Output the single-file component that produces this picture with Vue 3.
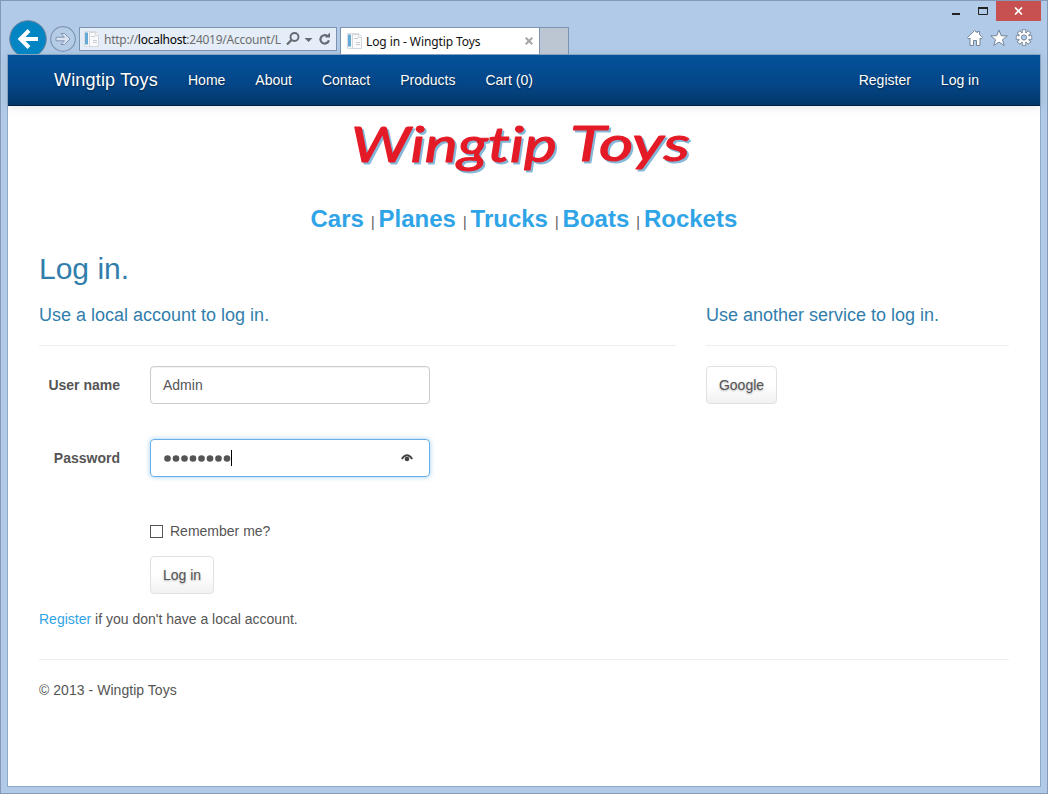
<script setup>
const nav = ['Home', 'About', 'Contact', 'Products', 'Cart (0)']
const categories = ['Cars', 'Planes', 'Trucks', 'Boats', 'Rockets']
const teeth = [0, 45, 90, 135, 180, 225, 270, 315]
</script>

<template>
  <div class="window">
    <header class="chrome">
      <svg class="back" width="38" height="34" viewBox="0 0 38 34">
        <circle cx="19" cy="19" r="18.3" fill="#0385c3" stroke="#6f8299" stroke-width="1" />
        <path d="M20 10.500 11.500 19 20 27.500M12 19H29" fill="none" stroke="#fff" stroke-width="4" />
      </svg>
      <svg class="forward" width="28" height="28" viewBox="0 0 28 28">
        <circle cx="14" cy="14" r="12.300" fill="#b5cce7" stroke="#8195b3" stroke-width="1.200" />
        <path d="M7 12.200h8.500L12 8.500h3.500L21 14l-5.500 5.500H12l3.500-3.700H7z" fill="#dbe6f4" stroke="#8294b0" stroke-width="1" />
      </svg>
      <div class="address">
        <svg class="page" width="16" height="16" viewBox="0 0 16 16">
          <path d="M.5.500h11l3 3v12H.5z" fill="#f5f7f9" stroke="#d8dce0" />
          <path d="M1 1.500h3v12H1z" fill="#65a9d7" />
          <path d="M5.500 1.500h6v3h3v11h-9z" fill="#fafafa" stroke="#d3d6da" />
          <path d="M7 5.500h4M9 9.500h4M9 11.500h4" stroke="#c7cbd0" />
        </svg>
        <span class="url">http://<b>localhost</b>:24019/Account/L</span>
        <svg class="tools" width="50" height="18" viewBox="0 0 50 18">
          <g fill="none" stroke="#656b73">
            <circle cx="9.500" cy="7" r="4" stroke-width="1.900" />
            <path d="M6.500 10 2 14.500" stroke-width="2.300" />
            <path d="M42.500 6.300A4.200 4.200 0 1 0 43.800 10.200" stroke-width="2.200" />
          </g>
          <path d="M19.500 8h8l-4 4zM40 7.500H45V2.500z" fill="#656b73" />
        </svg>
      </div>
      <div class="tab">
        <svg class="page" width="16" height="16" viewBox="0 0 16 16">
          <path d="M.5.500h11l3 3v12H.5z" fill="#f5f7f9" stroke="#d8dce0" />
          <path d="M1 1.500h3v12H1z" fill="#65a9d7" />
          <path d="M5.500 1.500h6v3h3v11h-9z" fill="#fafafa" stroke="#d3d6da" />
          <path d="M7 5.500h4M9 9.500h4M9 11.500h4" stroke="#c7cbd0" />
        </svg>
        <span class="title">Log in - Wingtip Toys</span>
        <svg class="tabx" width="8" height="8" viewBox="0 0 8 8"><path d="m.7.700 6.600 6.600m0-6.600L.7 7.300" stroke="#a5a5a5" stroke-width="2" /></svg>
      </div>
      <div class="newtab"></div>
      <div class="right">
        <div class="controls">
          <svg width="45" height="20" viewBox="0 0 45 20">
            <path d="M1 12h8v2H1z" fill="#222" />
            <path d="M27.500 7.500v6h9v-6z" fill="none" stroke="#222" />
            <path d="M27 6h10v2H27z" fill="#222" />
          </svg>
          <div class="close"><svg width="9" height="8" viewBox="0 0 9 8"><path d="m1 .5 7 7m0-7-7 7" stroke="#fff" stroke-width="1.700" /></svg></div>
        </div>
        <svg class="actions" width="68" height="18" viewBox="0 0 68 18" fill="#fff" stroke="#76869a" stroke-width="1">
          <path d="M8.500 1.500 1.500 8.500 2.800 10 4 9v7.500h3.500v-5h3v5H14V9l1.200 1 1.300-1.500-3-3v-3h-2v1.200z" />
          <path d="m33 1 2.200 5.700 6.100.2-4.800 3.800 1.700 5.800-5.200-3.400-5.200 3.400 1.700-5.800-4.800-3.800 6.100-.2z" />
          <g transform="translate(58 8.500)">
            <rect v-for="a in teeth" :key="a" x="-1.700" y="-7.700" width="3.400" height="4" :transform="`rotate(${a})`" />
            <circle r="5.300" />
            <rect v-for="a in teeth" :key="'f' + a" x="-1.200" y="-7.200" width="2.400" height="3.500" stroke="none" :transform="`rotate(${a})`" />
            <circle r="2.600" fill="#b1cbe9" />
          </g>
        </svg>
      </div>
    </header>

    <div class="viewport">
      <nav class="navbar">
        <span class="brand">Wingtip Toys</span>
        <a v-for="n in nav" :key="n">{{ n }}</a>
        <span class="grow"></span>
        <a>Register</a><a>Log in</a>
      </nav>

      <svg class="logo" width="370" height="75" viewBox="0 0 370 75">
        <g class="script">
          <text x="11" y="52" textLength="206" lengthAdjust="spacingAndGlyphs">Wingtip</text>
          <text x="230" y="51" textLength="120" lengthAdjust="spacingAndGlyphs">Toys</text>
        </g>
      </svg>

      <div class="cats">
        <template v-for="(c, i) in categories" :key="c"><span v-if="i" class="bar">|</span><a>{{ c }}</a></template>
      </div>

      <main>
        <h2>Log in.</h2>
        <div class="cols">
          <section class="local">
            <h4>Use a local account to log in.</h4>
            <hr />
            <div class="row"><label>User name</label><div class="input">Admin</div></div>
            <div class="row">
              <label>Password</label>
              <div class="input focus">
                <svg class="dots" width="68" height="8" viewBox="0 0 68 8"><circle v-for="d in 8" :key="d" :cx="d * 8.5 - 4" cy="4.500" r="3.300" fill="#555" /></svg><span class="caret"></span>
                <svg class="eye" width="12" height="8" viewBox="0 0 12 8"><path d="M.8 5Q6-2.400 11.200 5" fill="none" stroke="#444" stroke-width="2" /><circle cx="6" cy="5" r="2.300" fill="#444" /></svg>
              </div>
            </div>
            <div class="remember"><span class="check"></span>Remember me?</div>
            <button class="btn login">Log in</button>
            <p><a>Register</a> if you don't have a local account.</p>
          </section>
          <section class="social">
            <h4>Use another service to log in.</h4>
            <hr />
            <button class="btn google">Google</button>
          </section>
        </div>
        <hr class="footline" />
        <footer>© 2013 - Wingtip Toys</footer>
      </main>
    </div>
  </div>
</template>

<style>
body { margin: 0; overflow: hidden; }
</style>

<style scoped>
* { box-sizing: border-box; }
.window { width: 1048px; height: 794px; background: #b0cae7; border: 1px solid #8599b6; padding: 0 6px; font: 14px/20px "Liberation Sans", Arial, sans-serif; color: #555; }
svg { display: block; flex: none; }
.chrome { height: 53px; display: flex; align-items: flex-start; }
.back { margin: 19px 0 0 2px; }
.forward { margin: 24px 0 0 2px; }
.address { width: 258px; height: 24px; margin: 26px 0 0 2px; border: 1px solid #7c92ae; background: #e4edf8; display: flex; align-items: center; padding-left: 4px; }
.url { font: 12px/20px "Noto Sans", "Open Sans", sans-serif; color: #6d6d6d; width: 178px; margin: 2px 0 0 4px; white-space: nowrap; letter-spacing: -0.250px; }
.url b { font-weight: 400; color: #000; }
.tools { margin-left: 3px; }
.tab { margin: 26px 0 0 3px; width: 200px; height: 27px; background: #fff; border: 1px solid #7c92ae; border-bottom: 0; display: flex; align-items: center; padding-left: 6px; }
.title { font: 12px/20px "Noto Sans", "Open Sans", sans-serif; color: #111; margin: 2px 0 0 3px; width: 159px; letter-spacing: -0.090px; white-space: nowrap; }
.newtab { margin-top: 26px; width: 29px; height: 27px; background: #bcc6d3; border: 1px solid #7c92ae; border-width: 1px 1px 0 0; }
.right { margin-left: auto; display: flex; flex-direction: column; align-items: flex-end; }
.controls { display: flex; }
.close { width: 45px; height: 20px; background: #c75050; display: flex; align-items: center; justify-content: center; }
.actions { margin: 8px 7px 0 0; }
.viewport { height: 733px; border: 1px solid #8fa9c8; background: #fff; }
.navbar { height: 51px; border-bottom: 1px solid #02203f; background: linear-gradient(#04519b, #044687 60%, #033769); box-shadow: 0 1px 10px rgba(0,0,0,.1); display: flex; align-items: center; padding: 0 46px; color: #fff; text-shadow: 0 1px 2px rgba(0,0,0,.5); }
.brand { font-size: 18px; margin-right: 15px; width: 104px; white-space: nowrap; letter-spacing: 0.180px; }
.navbar a { padding: 0 15px; }
.grow { flex: 1; }
.logo { margin: 4px 0 0 332px; }
.script { font: italic 400 49px Lato, sans-serif; font-variant-ligatures: none; fill: #e41b27; stroke: #e41b27; stroke-width: 1.100px; stroke-linejoin: round; filter: drop-shadow(2px 2.500px 0 #83b8d9); }
.cats { margin-top: 18px; height: 33px; padding-left: 302.500px; display: flex; align-items: baseline; color: #2fa4e7; white-space: nowrap; }
.cats a { font: bold 24px/32px "Liberation Sans", Arial, sans-serif; }
.bar { color: #555; margin: 0 4px 0 7px; }
main { padding: 0 31px; }
h2 { margin: 16px 0 0; font-size: 30px; line-height: 33px; font-weight: 400; color: #317eac; }
h4 { margin: 0; font-size: 18px; line-height: 20px; font-weight: 400; color: #317eac; }
hr { border: 0; border-top: 1px solid #eee; margin: 20px 0; }
.cols { display: flex; gap: 30px; margin-top: 20px; }
.local { width: 637px; }
.social { flex: 1; }
.row { display: flex; align-items: center; margin-bottom: 35px; }
label { width: 81px; text-align: right; font-weight: 700; margin-right: 30px; }
.input { width: 280px; height: 38px; border: 1px solid #ccc; border-radius: 4px; padding: 0 12px; display: flex; align-items: center; box-shadow: inset 0 1px 1px rgba(0,0,0,.05); }
.focus { border-color: #66afe9; box-shadow: 0 0 5px rgba(102,175,233,.6); }
.caret { width: 1px; height: 16px; background: #000; }
.eye { margin: 0 4px 0 auto; }
.remember { display: flex; align-items: center; margin: 44px 0 0 111px; }
.check { width: 13px; height: 13px; border: 1px solid #555; margin-right: 7px; }
.btn { display: block; height: 38px; padding: 0; border: 1px solid #e1e1e1; border-radius: 4px; background: linear-gradient(#fff, #fff 50%, #f1f1f1); color: #555; font: 14px/20px "Liberation Sans", Arial, sans-serif; text-shadow: 0 1px 2px rgba(0,0,0,.3); }
.login { width: 64px; margin: 15px 0 0 111px; }
.google { width: 71px; }
p { margin: 15px 0 0; }
p a { color: #2fa4e7; }
.footline { margin: 30px 0 20px; }
footer { letter-spacing: 0.040px; }
</style>
